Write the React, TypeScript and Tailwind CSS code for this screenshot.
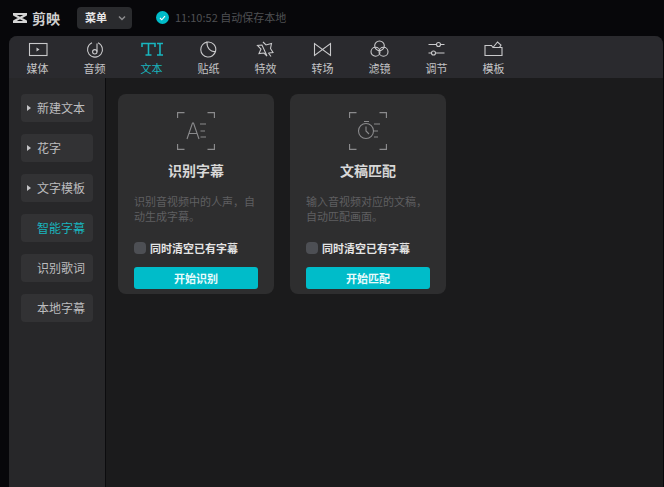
import type { ReactNode } from "react";

const font = "font-['Noto_Sans_CJK_SC','Noto_Sans',sans-serif]";

const IconSvg = ({ children }: { children: ReactNode }) => (
  <svg width="24" height="20" viewBox="0 0 24 20" fill="none" stroke="#c9c9cb" strokeWidth="1.1">
    {children}
  </svg>
);

const tabs: { label: string; active?: boolean; icon: ReactNode }[] = [
  {
    label: "媒体",
    icon: (
      <IconSvg>
        <rect x="3.5" y="3.5" width="17.500" height="12" />
        <path d="M10.500 7.500l3 2-3 2z" fill="#c9c9cb" stroke="none" />
      </IconSvg>
    ),
  },
  {
    label: "音频",
    icon: (
      <IconSvg>
        <path d="M15 2.800a7.500 7.500 0 1 1-6 0" />
        <circle cx="11.800" cy="11.800" r="2.200" />
        <path d="M14 11.800V3.500" />
      </IconSvg>
    ),
  },
  {
    label: "文本",
    active: true,
    icon: (
      <svg width="24" height="20" viewBox="0 0 24 20" fill="none" stroke="#19b5be" strokeWidth="1.300">
        <path d="M2 7V3.500h13V7M8.500 3.500V15M5.500 15h6" strokeWidth="1.600" />
        <path d="M17 3.500h6M20 3.500V15M17 15h6" strokeWidth="1.600" />
      </svg>
    ),
  },
  {
    label: "贴纸",
    icon: (
      <IconSvg>
        <path d="M10 2.100a7.500 7.500 0 1 0 8.500 9.400" />
        <path d="M10 2.100a7.500 7.500 0 0 1 8.500 9.400c-4.500 1-9-3.500-8.500-9.400z" />
      </IconSvg>
    ),
  },
  {
    label: "特效",
    icon: (
      <IconSvg>
        <path d="M9 2l3 3 5.500-1.500-1 5 2.500 4-4.500.5M13 16l-3-3-5 .5L7 9 3.500 5.500 8 5z" />
        <path d="M14.500 13l2.500 3.500" />
      </IconSvg>
    ),
  },
  {
    label: "转场",
    icon: (
      <IconSvg>
        <path d="M3.500 3.500v12L19.500 3.500v12z" />
      </IconSvg>
    ),
  },
  {
    label: "滤镜",
    icon: (
      <IconSvg>
        <circle cx="11.500" cy="5.800" r="4.800" />
        <circle cx="7.500" cy="11.800" r="4.500" />
        <circle cx="15.500" cy="11.800" r="4.500" />
      </IconSvg>
    ),
  },
  {
    label: "调节",
    icon: (
      <IconSvg>
        <path d="M3.500 4.500h8M15.500 4.500h4M3.500 13h3M10.500 13h9" />
        <circle cx="13.500" cy="4.500" r="2" />
        <circle cx="8.500" cy="13" r="2" />
      </IconSvg>
    ),
  },
  {
    label: "模板",
    icon: (
      <IconSvg>
        <path d="M3 5.500h6.500l1.500 2h9v8H3z" />
        <path d="M11 7.500l4.500-5.500 3.500 3-1.500 2.500" />
      </IconSvg>
    ),
  },
];

const side = [
  { label: "新建文本", arrow: true },
  { label: "花字", arrow: true },
  { label: "文字模板", arrow: true },
  { label: "智能字幕", active: true },
  { label: "识别歌词" },
  { label: "本地字幕" },
];

const Card = ({
  icon,
  title,
  desc,
  button,
}: {
  icon: ReactNode;
  title: string;
  desc: string;
  button: string;
}) => (
  <div className="flex h-[200px] w-[156px] flex-col rounded-lg bg-[#2e2e2f] px-4 pt-[18px]">
    <div className="flex justify-center">
      <svg width="38" height="38" viewBox="0 0 38 38" fill="none" stroke="#8a8a8c" strokeWidth="1.100">
        <path d="M.5 6V.5h7M30.500.5h7V6M.5 32v5.500h7M30.500 37.500h7V32" strokeWidth="1.300" />
        {icon}
      </svg>
    </div>
    <div className="mt-[10px] text-center text-[14px] leading-[20px] font-bold text-[#d8d8d8]">{title}</div>
    <p className="mt-[14px] h-[30px] text-[11px] leading-[15px] text-[#5f5f61]">{desc}</p>
    <div className="mt-[16px] flex items-center gap-1">
      <span className="h-[12px] w-[12px] rounded-[4px] bg-[#4d4f54]" />
      <span className="text-[11px] leading-[16px] font-bold text-[#e4e4e4]">同时清空已有字幕</span>
    </div>
    <button className="mt-[11px] h-[22px] w-[124px] rounded-[3px] bg-[#00bcc9] text-[11px] leading-[22px] font-bold text-[#e8fbfc]">
      {button}
    </button>
  </div>
);

export default function App() {
  return (
    <div className={`flex h-[487px] w-[664px] flex-col overflow-hidden bg-[#07070a] ${font}`}>
      <header className="flex h-[36px] shrink-0 items-center pb-[1px]">
        <div className="ml-[12px] flex w-[65px] items-center gap-1">
          <svg width="16" height="12" viewBox="0 0 16 12" fill="none" stroke="#d4d4d4" strokeWidth="2">
            <path d="M1 2h14M1 10h14M1.500 2.500 14.500 9.500M14.500 2.500 1.500 9.500" />
          </svg>
          <span className="text-[14px] leading-none font-bold text-[#cfcfcf]">剪映</span>
        </div>
        <div className="flex h-[22px] w-[55px] items-center justify-between rounded bg-[#2a2b2e] pr-[6px] pl-[8px]">
          <span className="text-[11px] font-bold text-[#e8e8e8]">菜单</span>
          <svg width="8" height="6" viewBox="0 0 8 6" fill="none" stroke="#8c8c8e" strokeWidth="1.500">
            <path d="M1 1.500l3 3 3-3" />
          </svg>
        </div>
        <span className="ml-[24px] flex h-[13px] w-[13px] items-center justify-center rounded-full bg-[#00bcc9]">
          <svg width="7" height="6" viewBox="0 0 7 6" fill="none" stroke="#fff" strokeWidth="1.100">
            <path d="M1 3l1.800 1.800L6 1.200" />
          </svg>
        </span>
        <span className="ml-[6px] text-[11px] text-[#4f5053]">11:10:52 自动保存本地</span>
      </header>

      <div className="ml-[9px] flex min-h-0 w-[654px] flex-1 flex-col overflow-hidden rounded-t-lg bg-[#1b1b1c]">
        <nav className="flex h-[42px] shrink-0 bg-[#2a2a2e]">
          {tabs.map((t) => (
            <div key={t.label} className="flex w-[57px] flex-col items-center pt-[4px]">
              {t.icon}
              <span className={`text-[11px] leading-[16px] ${t.active ? "text-[#19b5be]" : "text-[#c4c4c6]"}`}>
                {t.label}
              </span>
            </div>
          ))}
        </nav>
        <div className="flex min-h-0 flex-1">
          <aside className="flex w-[97px] shrink-0 flex-col gap-3 border-r border-[#0c0c0e] bg-[#272729] pt-[16px] pl-[12px]">
            {side.map((s) => (
              <div key={s.label} className="relative h-[28px] w-[72px] rounded bg-[#323234] pl-4 text-[12px] leading-[28px]">
                {s.arrow && (
                  <span className="absolute top-[11px] left-[6px] h-0 w-0 border-y-[3px] border-l-[4px] border-y-transparent border-l-[#c4c4c6]" />
                )}
                <span className={s.active ? "text-[#19b5be]" : "text-[#bcbcbe]"}>{s.label}</span>
              </div>
            ))}
          </aside>
          <main className="flex flex-1 items-start gap-4 pt-[16px] pl-[12px]">
            <Card
              title="识别字幕"
              desc="识别音视频中的人声，自动生成字幕。"
              button="开始识别"
              icon={<path d="M10 27 15.500 11h1L22 27M12 21.500h8M23 12h6M23.500 19h4.500M23.500 25h5.500" />}
            />
            <Card
              title="文稿匹配"
              desc="输入音视频对应的文稿，自动匹配画面。"
              button="开始匹配"
              icon={
                <>
                  <circle cx="17" cy="19" r="7.500" />
                  <path d="M17 14.500V19l3 3M15 9.500h5M25 12h6M25 19h4M25 25h4" />
                </>
              }
            />
          </main>
        </div>
      </div>
    </div>
  );
}
